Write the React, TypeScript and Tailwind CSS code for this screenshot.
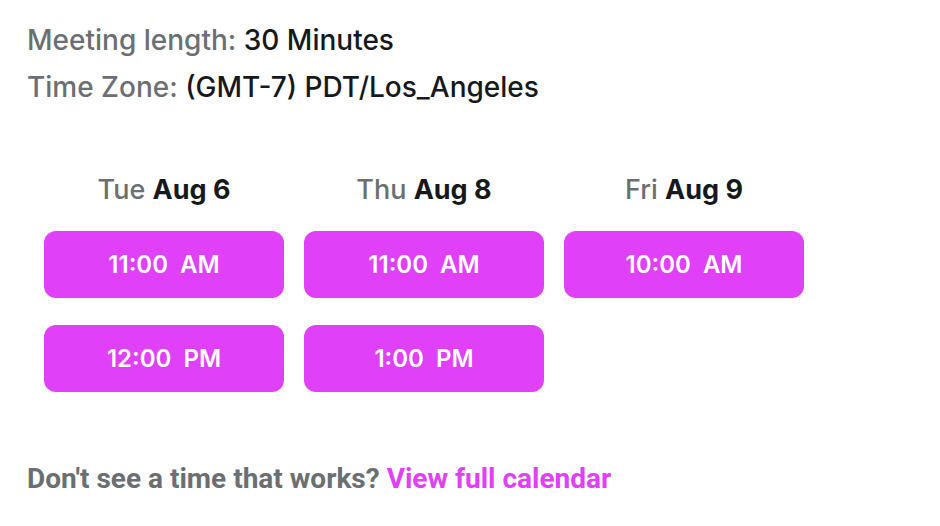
import React from "react";

const days = [
  { dow: "Tue", date: "Aug 6", times: ["11:00  AM", "12:00  PM"] },
  { dow: "Thu", date: "Aug 8", times: ["11:00  AM", "1:00  PM"] },
  { dow: "Fri", date: "Aug 9", times: ["10:00  AM"] },
];

export default function App() {
  return (
    <div className="w-[940px] h-[526px] bg-white px-[27px] pt-[17px]" style={{ fontFamily: "Inter, sans-serif" }}>
      <div className="text-[28px] font-medium leading-[47px] text-[#6b6f72]">
        <div>
          Meeting length: <span className="text-[#16191c]">30 Minutes</span>
        </div>
        <div>
          Time Zone: <span className="text-[#16191c]">(GMT-7) PDT/Los_Angeles</span>
        </div>
      </div>
      <div className="mt-[62px] ml-[17px] flex gap-[20px]">
        {days.map((d) => (
          <div key={d.dow} className="w-[240px] flex flex-col">
            <div className="text-center text-[27px] font-medium leading-[34px] text-[#6b6f72] mb-[24px]">
              {d.dow} <span className="font-bold text-[#16191c]">{d.date}</span>
            </div>
            <div className="flex flex-col gap-[27px]">
              {d.times.map((t) => (
                <div
                  key={t}
                  className="h-[67px] rounded-[12px] bg-[#e040f7] text-white font-semibold text-[24px] flex items-center justify-center whitespace-pre"
                >
                  {t}
                </div>
              ))}
            </div>
          </div>
        ))}
      </div>
      <div
        className="mt-[70px] text-[28px] leading-[34px] font-bold text-[#6b6f72]"
        style={{ fontFamily: "Roboto, sans-serif" }}
      >
        Don't see a time that works? <span className="text-[#e040f7]">View full calendar</span>
      </div>
    </div>
  );
}
